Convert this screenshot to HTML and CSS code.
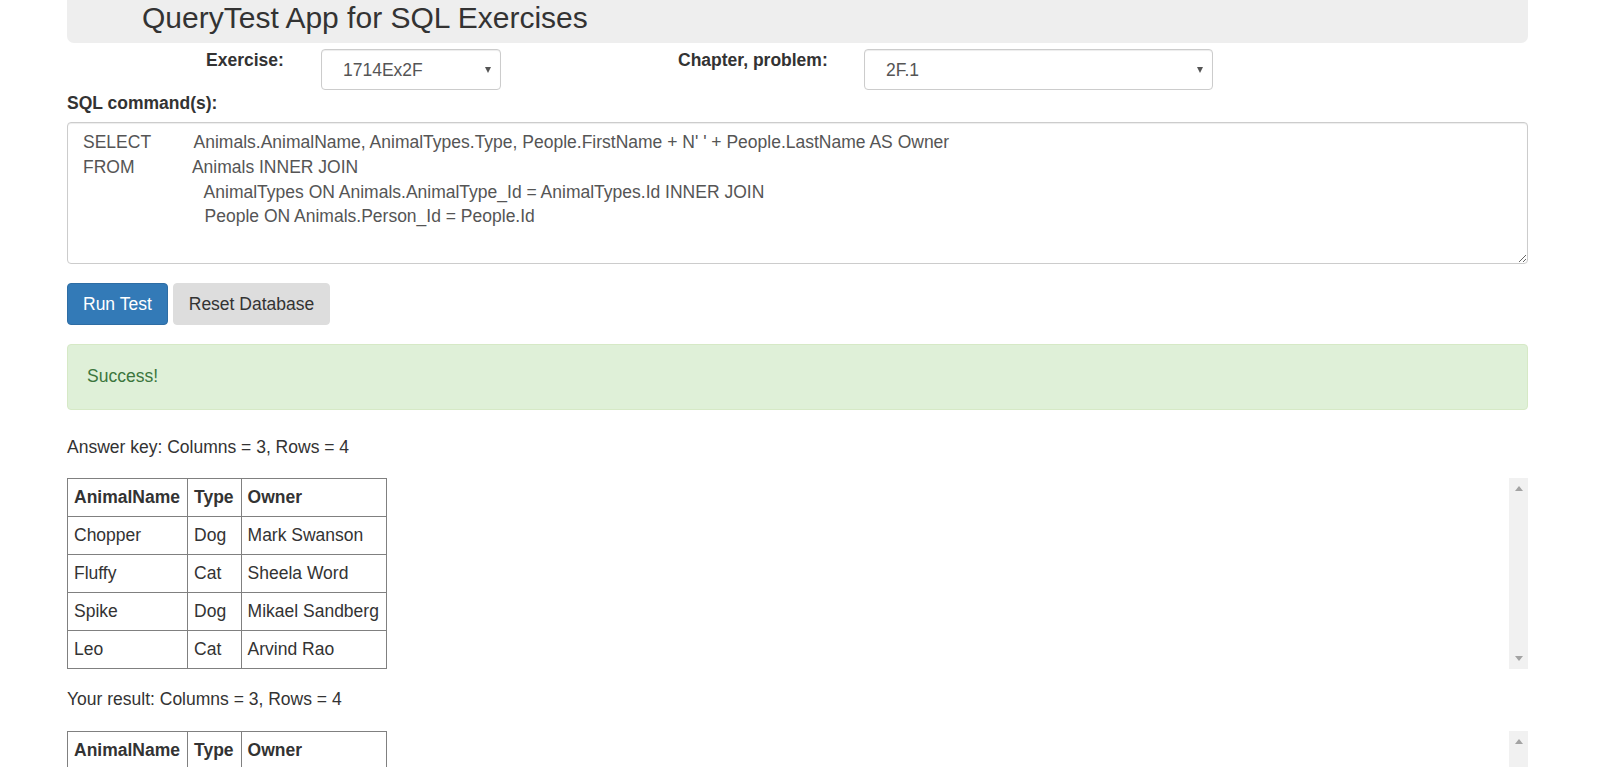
FILE: index.html
```html
<!DOCTYPE html>
<html>
<head>
<meta charset="utf-8">
<title>QueryTest App for SQL Exercises</title>
<link rel="stylesheet" href="styles.css">
</head>
<body>
<div class="page">
  <div class="header">
    <h1 class="title">QueryTest App for SQL Exercises</h1>
  </div>

  <div class="pick-row">
    <label class="pick-label pick-label-ex">Exercise:</label>
    <div class="select-wrap select-ex">
      <select class="select"><option>1714Ex2F</option></select>
    </div>
    <label class="pick-label pick-label-ch">Chapter, problem:</label>
    <div class="select-wrap select-ch">
      <select class="select"><option>2F.1</option></select>
    </div>
  </div>

  <div class="sql-label">SQL command(s):</div>
  <textarea class="sql" spellcheck="false">SELECT         Animals.AnimalName, AnimalTypes.Type, People.FirstName + N' ' + People.LastName AS Owner
FROM            Animals INNER JOIN
                         AnimalTypes ON Animals.AnimalType_Id = AnimalTypes.Id INNER JOIN
                         People ON Animals.Person_Id = People.Id</textarea>

  <div class="buttons">
    <button class="btn btn-primary">Run Test</button>
    <button class="btn btn-default">Reset Database</button>
  </div>

  <div class="alert">Success!</div>

  <p class="caption">Answer key: Columns = 3, Rows = 4</p>
  <div class="result-box">
    <table class="result">
      <tr><th>AnimalName</th><th>Type</th><th>Owner</th></tr>
      <tr><td>Chopper</td><td>Dog</td><td>Mark Swanson</td></tr>
      <tr><td>Fluffy</td><td>Cat</td><td>Sheela Word</td></tr>
      <tr><td>Spike</td><td>Dog</td><td>Mikael Sandberg</td></tr>
      <tr><td>Leo</td><td>Cat</td><td>Arvind Rao</td></tr>
    </table>
    <div class="fake-scroll">
      <span class="arrow-up"></span>
      <span class="arrow-down"></span>
    </div>
  </div>

  <p class="caption caption-2">Your result: Columns = 3, Rows = 4</p>
  <div class="result-box">
    <table class="result">
      <tr><th>AnimalName</th><th>Type</th><th>Owner</th></tr>
      <tr><td>Chopper</td><td>Dog</td><td>Mark Swanson</td></tr>
      <tr><td>Fluffy</td><td>Cat</td><td>Sheela Word</td></tr>
      <tr><td>Spike</td><td>Dog</td><td>Mikael Sandberg</td></tr>
      <tr><td>Leo</td><td>Cat</td><td>Arvind Rao</td></tr>
    </table>
    <div class="fake-scroll">
      <span class="arrow-up"></span>
      <span class="arrow-down"></span>
    </div>
  </div>
</div>
</body>
</html>
```

FILE: styles.css
```css
html, body {
  margin: 0;
  padding: 0;
  background: #fff;
}
body {
  font-family: "Liberation Sans", Arial, sans-serif;
  font-size: 17.5px;
  line-height: 25px;
  color: #333;
}
.page {
  margin: 0 80px 0 67px;
}
.header {
  background: #eee;
  height: 43px;
  border-radius: 0 0 7px 7px;
  box-sizing: border-box;
  padding-top: 1px;
}
.title {
  margin: 0;
  padding-left: 75px;
  font-size: 30px;
  font-weight: normal;
  line-height: 33px;
  color: #333;
}
.pick-row {
  display: flex;
  align-items: flex-start;
  margin-top: 6px;
}
.pick-label {
  font-weight: bold;
  line-height: 25px;
  margin-top: -1px;
}
.pick-label-ex {
  margin-left: 139px;
  width: 115px;
}
.pick-label-ch {
  margin-left: 177px;
  width: 186px;
}
.select-wrap {
  position: relative;
}
.select-ex { width: 180px; }
.select-ch { width: 349px; }
.select {
  -webkit-appearance: none;
  appearance: none;
  width: 100%;
  height: 41px;
  box-sizing: border-box;
  border: 1px solid #ccc;
  border-radius: 4px;
  background: #fff;
  padding: 0 30px 0 21px;
  font-family: "Liberation Sans", Arial, sans-serif;
  font-size: 17.5px;
  color: #555;
  box-shadow: inset 0 1px 1px rgba(0,0,0,.075);
}
.select-wrap::after {
  content: "";
  position: absolute;
  right: 10px;
  top: 18px;
  border-left: 3.5px solid transparent;
  border-right: 3.5px solid transparent;
  border-top: 6px solid #555;
  pointer-events: none;
}
.sql-label {
  font-weight: bold;
  margin-top: 1px;
  margin-bottom: 6px;
}
.sql {
  display: block;
  box-sizing: border-box;
  width: 100%;
  height: 142px;
  margin: 0;
  padding: 7px 15px;
  border: 1px solid #ccc;
  border-radius: 4px;
  font-family: "Liberation Sans", Arial, sans-serif;
  font-size: 17.5px;
  line-height: 24.8px;
  color: #555;
  resize: vertical;
  white-space: pre;
  overflow: hidden;
  box-shadow: inset 0 1px 1px rgba(0,0,0,.075);
}
.buttons {
  display: flex;
  gap: 5px;
  margin-top: 19px;
}
.btn {
  height: 42px;
  box-sizing: border-box;
  padding: 0 15px;
  border-radius: 4px;
  font-family: "Liberation Sans", Arial, sans-serif;
  font-size: 17.5px;
  line-height: 25px;
  cursor: pointer;
}
.btn-primary {
  background: #337ab7;
  border: 1px solid #2e6da4;
  color: #fff;
}
.btn-default {
  background: #ddd;
  border: 1px solid #ddd;
  color: #333;
}
.alert {
  margin-top: 19px;
  box-sizing: border-box;
  height: 66px;
  padding: 19px 19px;
  background: #dff0d8;
  border: 1px solid #d6e9c6;
  border-radius: 4px;
  color: #3c763d;
}
.caption {
  margin: 25px 0 18px;
}
.caption-2 {
  margin-top: 18px;
  margin-bottom: 19px;
}
.result-box {
  display: flex;
  justify-content: space-between;
  height: 191px;
}
.result {
  border-collapse: collapse;
  align-self: flex-start;
}
.result th,
.result td {
  border: 1px solid #808080;
  padding: 6px 7px 6px 6px;
  text-align: left;
  line-height: 25px;
}
.result th {
  font-weight: bold;
}
.fake-scroll {
  width: 19px;
  background: #f1f1f1;
  display: flex;
  flex-direction: column;
  justify-content: space-between;
  align-items: center;
  padding: 8px 0;
  box-sizing: border-box;
}
.arrow-up {
  width: 0;
  height: 0;
  border-left: 4.5px solid transparent;
  border-right: 4.5px solid transparent;
  border-bottom: 5px solid #a3a3a3;
}
.arrow-down {
  width: 0;
  height: 0;
  border-left: 4.5px solid transparent;
  border-right: 4.5px solid transparent;
  border-top: 5px solid #a3a3a3;
}
```
